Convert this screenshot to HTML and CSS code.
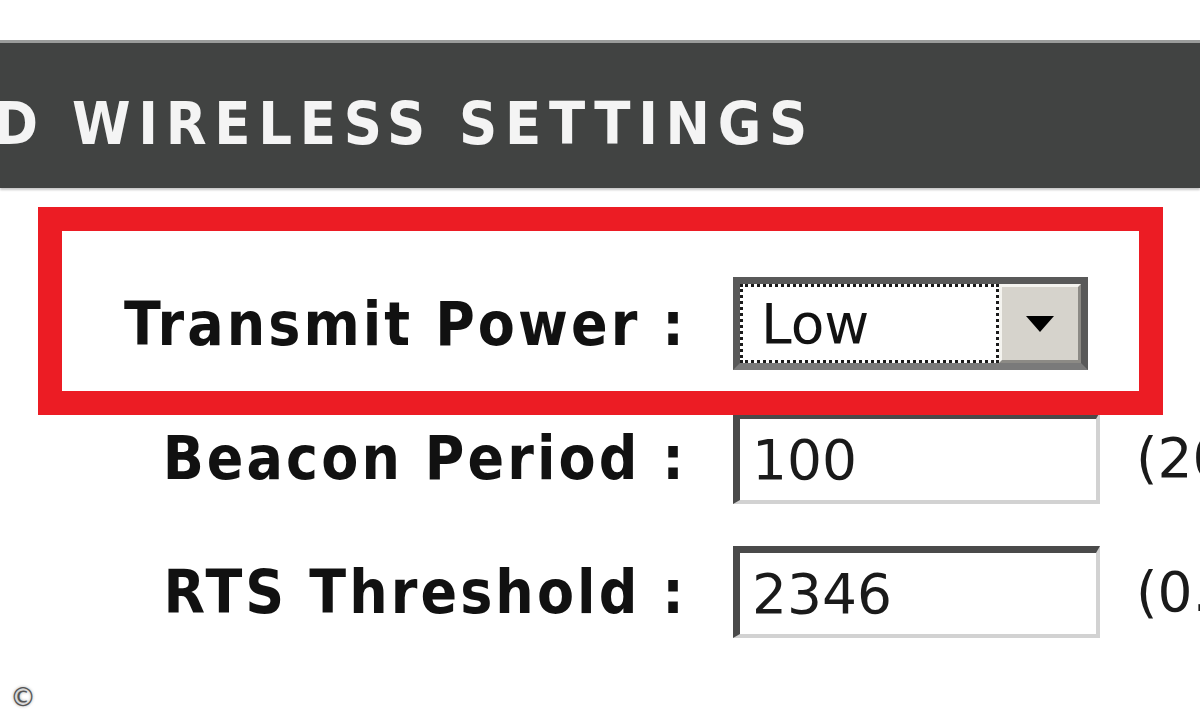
FILE: index.html
```html
<!DOCTYPE html>
<html lang="en">
<head>
<meta charset="utf-8">
<title>Advanced Wireless Settings</title>
<link rel="stylesheet" href="styles.css">
</head>
<body>
  <div class="page">
    <div class="titlebar">
      <h1 class="title">D WIRELESS SETTINGS</h1>
    </div>

    <div class="form">
      <div class="row row-highlighted">
        <span class="highlight"></span>
        <label class="label">Transmit Power :</label>
        <div class="field">
          <div class="select">
            <span class="select-value">Low</span>
            <span class="select-button">
              <svg width="28" height="16" viewBox="0 0 28 16"><path d="M0 0 H28 L14 16 Z" fill="#000"/></svg>
            </span>
          </div>
        </div>
      </div>

      <div class="row">
        <label class="label">Beacon Period :</label>
        <div class="field">
          <span class="input">100</span>
          <span class="hint">(20..1000)</span>
        </div>
      </div>

      <div class="row">
        <label class="label">RTS Threshold :</label>
        <div class="field">
          <span class="input">2346</span>
          <span class="hint">(0..2347)</span>
        </div>
      </div>
    </div>

    <span class="copyright">©</span>
  </div>
</body>
</html>
```

FILE: styles.css
```css
html, body {
  margin: 0;
  padding: 0;
  background: #ffffff;
  overflow: hidden;
}

.page {
  position: relative;
  width: 1200px;
  height: 720px;
  overflow: hidden;
  padding-top: 40px;
  box-sizing: border-box;
  font-family: "DejaVu Sans", Verdana, sans-serif;
}

/* dark section heading bar */
.titlebar {
  height: 148px;
  background: #414342;
  border-top: 3px solid #9a9c9b;
  box-sizing: border-box;
  box-shadow: 0 2px 2px #c8c8c8;
  overflow: hidden;
}

.title {
  margin: 0 0 0 -6px;
  padding-top: 51px;
  font-family: "DejaVu Sans Condensed", "DejaVu Sans", sans-serif;
  font-weight: bold;
  font-size: 59px;
  line-height: 1;
  letter-spacing: 7.7px;
  color: #f4f4f4;
  white-space: nowrap;
}

/* settings rows */
.form {
  display: flex;
  flex-direction: column;
  gap: 42px;
  padding-top: 89px;
}

.row {
  display: grid;
  grid-template-columns: 684px 1fr;
  column-gap: 49px;
  align-items: center;
}

.row-highlighted {
  position: relative;
}

.highlight {
  position: absolute;
  left: 38px;
  right: 37px;
  top: -70px;
  bottom: -45px;
  border: 24px solid #ec1c24;
  pointer-events: none;
}

.label {
  justify-self: end;
  margin-right: -3px;
  font-family: "DejaVu Sans Condensed", "DejaVu Sans", sans-serif;
  font-weight: bold;
  font-size: 60px;
  line-height: 1;
  letter-spacing: 3.1px;
  color: #111;
  white-space: nowrap;
}

.field {
  display: flex;
  align-items: center;
  gap: 36px;
  white-space: nowrap;
}

/* drop-down box */
.select {
  position: relative;
  z-index: 1;
  display: flex;
  width: 355px;
  height: 93px;
  box-sizing: border-box;
  border: 7px solid #595959;
  border-bottom-color: #7a7a7a;
  background: #fff;
}

.select-value {
  flex: 1;
  display: flex;
  align-items: center;
  padding-left: 18px;
  border: 3px dotted #1a1a1a;
  font-size: 55px;
  color: #111;
}

.select-button {
  width: 76px;
  display: flex;
  align-items: center;
  justify-content: center;
  background: #d6d3cc;
  border-left: 3px solid #f4f3ef;
  border-top: 3px solid #f4f3ef;
  border-right: 3px solid #8c8a85;
  border-bottom: 3px solid #8c8a85;
}

/* text inputs */
.input {
  display: flex;
  align-items: center;
  width: 367px;
  height: 92px;
  box-sizing: border-box;
  padding-left: 12px;
  border-left: 7px solid #4a4a4a;
  border-top: 7px solid #4a4a4a;
  border-right: 4px solid #d2d2d2;
  border-bottom: 4px solid #d2d2d2;
  font-size: 55px;
  color: #1a1a1a;
  background: #fff;
}

.hint {
  font-size: 55px;
  color: #1a1a1a;
}

.copyright {
  position: absolute;
  left: 10px;
  top: 682px;
  font-size: 26px;
  color: #555;
  text-shadow: 0 0 3px #999;
}
```
